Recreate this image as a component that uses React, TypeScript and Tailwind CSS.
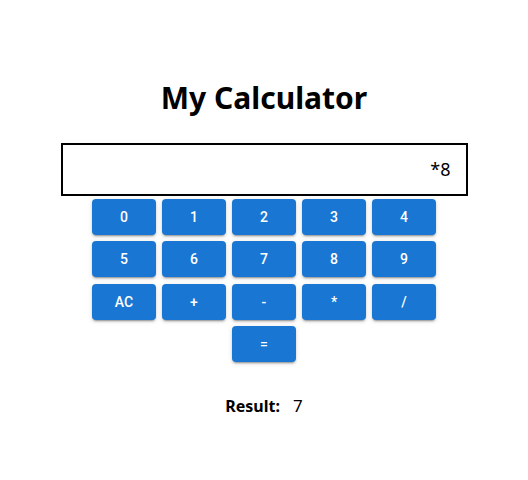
// calculator page
import React, { useState } from "react";

const keys = ["0", "1", "2", "3", "4", "5", "6", "7", "8", "9", "AC", "+", "-", "*", "/"];

const CalcButton = ({ label, onClick }: { label: string; onClick: () => void }) => (
  <button
    onClick={onClick}
    className="w-16 h-9 rounded bg-[#1976d2] text-white text-sm font-medium shadow-[0_3px_1px_-2px_rgba(0,0,0,0.2),0_2px_2px_0_rgba(0,0,0,0.14),0_1px_5px_0_rgba(0,0,0,0.12)] hover:bg-[#1565c0]"
    style={{ fontFamily: "Roboto, sans-serif" }}
  >
    {label}
  </button>
);

const App = () => {
  const [input, setInput] = useState("*8");
  const [result, setResult] = useState("7");

  const press = (k: string) => {
    if (k === "AC") {
      setInput("");
      setResult("");
    } else if (k === "=") {
      try {
        // eslint-disable-next-line no-new-func
        setResult(String(Function(`return (${result}${input})`)()));
        setInput("");
      } catch {
        setResult("Error");
      }
    } else {
      setInput(input + k);
    }
  };

  return (
    <div className="bg-white min-h-screen flex flex-col items-center pt-[78px]" style={{ fontFamily: '"Noto Sans", sans-serif' }}>
      {/* Title */}
      <h1 className="text-[30px] font-bold text-black leading-[40px] mb-[25px]">My Calculator</h1>

      {/* Display */}
      <div className="w-[407px] h-[53px] border-2 border-black flex items-center justify-end pr-[15px] text-[18px] text-black">
        {input}
      </div>

      {/* Keypad */}
      <div className="mt-[3px] w-[344px] flex flex-wrap justify-center gap-x-[6px] gap-y-[6.4px]">
        {keys.map((k) => (
          <CalcButton key={k} label={k} onClick={() => press(k)} />
        ))}
        <CalcButton label="=" onClick={() => press("=")} />
      </div>

      {/* Result */}
      <div className="mt-[31px] flex items-center gap-[13px] text-black">
        <span className="font-bold text-[16px]">Result:</span>
        <span className="text-[17px]">{result}</span>
      </div>
    </div>
  );
};

export default App;
